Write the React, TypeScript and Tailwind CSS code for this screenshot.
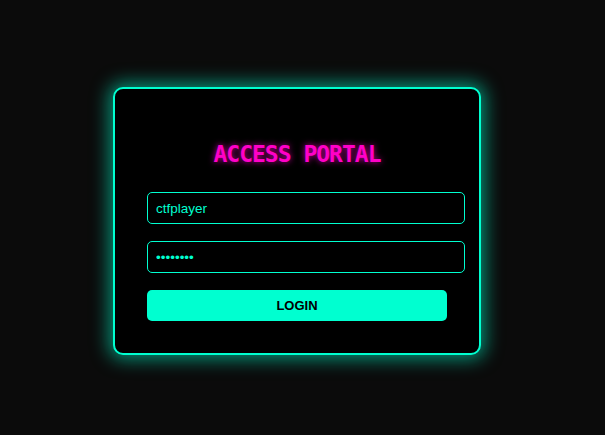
import React from 'react';

const App: React.FC = () => {
  return (
    <div className="min-h-screen w-full bg-[#0b0b0b] flex justify-center pr-[11px] pt-[87px] font-['Liberation_Sans',Arial,sans-serif]">
      <div className="w-[368px] h-[268px] bg-black border-2 border-[#00ffd0] rounded-[10px] px-8 pt-[50px] shadow-[0_0_18px_4px_rgba(0,255,208,0.55)]">
        <h2 className="text-center font-['DejaVu_Sans_Mono',monospace] font-bold text-[23px] tracking-[-1px] leading-[30px] text-[#ff00c8] [text-shadow:0_0_6px_rgba(255,0,200,0.8)]">
          ACCESS PORTAL
        </h2>
        <div className="mt-[23px] flex flex-col gap-[17px]">
          <input
            type="text"
            defaultValue="ctfplayer"
            className="w-[318px] h-8 px-2 bg-black border border-[#00ffd0] rounded-[5px] text-[#00ffd0] text-[13.5px] outline-none"
          />
          <input
            type="password"
            defaultValue="password"
            className="w-[318px] h-8 px-2 bg-black border border-[#00ffd0] rounded-[5px] text-[#00ffd0] text-[13.5px] outline-none"
          />
          <button className="w-[300px] h-[31px] bg-[#00ffd0] rounded-[5px] text-black text-[13px] font-bold">
            LOGIN
          </button>
        </div>
      </div>
    </div>
  );
};

export default App;
